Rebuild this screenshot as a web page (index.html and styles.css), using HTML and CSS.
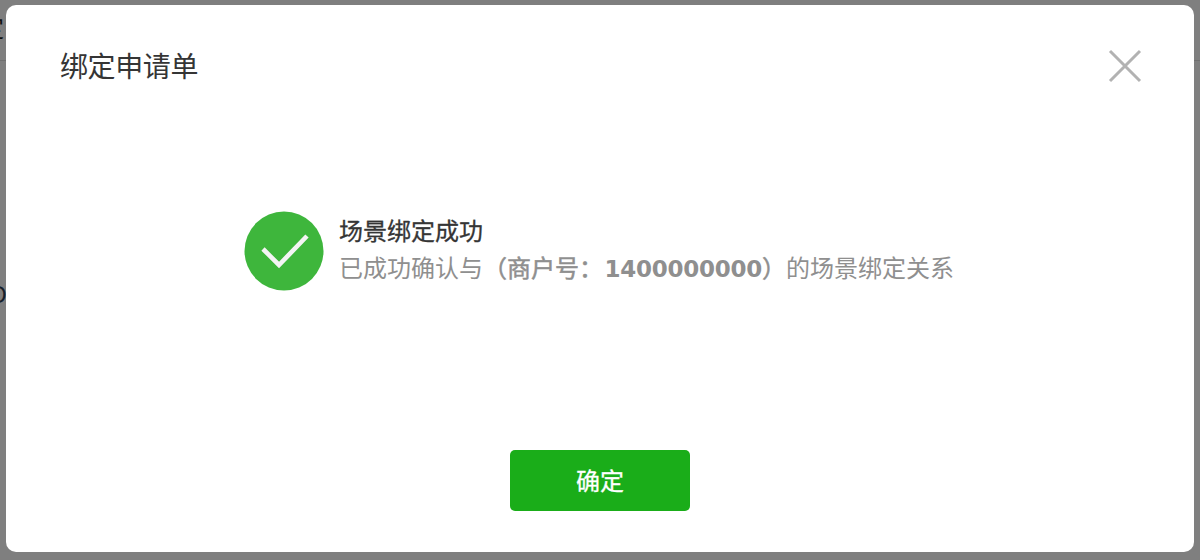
FILE: index.html
```html
<!DOCTYPE html>
<html lang="zh-CN">
<head>
  <meta charset="UTF-8" />
  <meta name="viewport" content="width=device-width, initial-scale=1.0"/>
  <title>绑定申请单</title>
  <link rel="stylesheet" href="styles.css">
</head>
<body>
  <div class="page-behind">
    <span class="behind-top">定</span>
    <span class="behind-mid">O</span>
    <div class="behind-line"></div>
  </div>

  <div class="mask">
    <div class="dialog">
      <div class="dialog-head">
        <h3 class="dialog-title">绑定申请单</h3>
        <a class="dialog-close" href="#" aria-label="关闭">
          <svg width="34" height="34" viewBox="0 0 34 34">
            <path d="M2 2 L32 32 M32 2 L2 32" stroke="#b2b2b2" stroke-width="3" fill="none"/>
          </svg>
        </a>
      </div>
      <div class="dialog-body">
        <svg class="result-icon" width="80" height="80" viewBox="0 0 80 80">
          <circle cx="40" cy="40" r="39.5" fill="#3eb63c"/>
          <path d="M19 38 L35 54 L63 25" stroke="#f4f4f4" stroke-width="4.6" fill="none"/>
        </svg>
        <div class="result-text">
          <p class="result-title">场景绑定成功</p>
          <p class="result-desc">已成功确认与<b>（商户号：<span class="merchant-no">1400000000</span>）</b>的场景绑定关系</p>
        </div>
      </div>
      <div class="dialog-foot">
        <a class="btn-primary" href="#">确定</a>
      </div>
    </div>
  </div>
</body>
</html>
```

FILE: styles.css
```css
* { margin: 0; padding: 0; box-sizing: border-box; }
html, body {
  height: 100%;
  overflow: hidden;
}
body {
  background: #7f7f7f;
  font-family: "Noto Sans CJK SC", "Noto Sans", sans-serif;
  color: #353535;
}
a { text-decoration: none; }

/* the page under the mask, only its edges show */
.page-behind {
  position: absolute;
  top: 0;
  left: 0;
  width: 100%;
  height: 100%;
}
.behind-top {
  position: absolute;
  top: 10px;
  left: -20px;
  font-size: 24px;
  line-height: 34px;
  color: #111;
}
.behind-mid {
  position: absolute;
  top: 278px;
  left: -12px;
  font-family: "Liberation Sans", sans-serif;
  font-size: 24px;
  line-height: 34px;
  color: #16202c;
}
.behind-line {
  position: absolute;
  top: 60px;
  left: 0;
  width: 100%;
  height: 1px;
  background: #707070;
}

.mask {
  position: absolute;
  top: 0;
  left: 0;
  width: 100%;
  height: 100%;
  padding: 5px 6px 8px;
}
.dialog {
  height: 100%;
  background: #fff;
  border-radius: 10px;
  display: flex;
  flex-direction: column;
}
.dialog-head {
  display: flex;
  justify-content: space-between;
  align-items: flex-start;
  padding: 43px 52px 0 54px;
}
.dialog-title {
  font-size: 28px;
  line-height: 34px;
  font-weight: 400;
  letter-spacing: -0.4px;
}
.dialog-close {
  display: block;
  width: 34px;
  height: 34px;
  margin-top: 1px;
}
.dialog-body {
  display: flex;
  align-items: flex-start;
  gap: 15px;
  margin-top: 128px;
  padding-left: 238px;
}
.result-icon { flex: none; }
.result-title {
  font-size: 24px;
  line-height: 37px;
  font-weight: 400;
  -webkit-text-stroke: 0.3px #353535;
}
.result-desc {
  font-size: 24px;
  line-height: 37px;
  color: #8f8f8f;
}
.result-desc b {
  font-weight: 400;
  -webkit-text-stroke: 0.5px #8f8f8f;
}
.merchant-no {
  margin-left: 1.5px;
  font-family: "DejaVu Sans", sans-serif;
  font-size: 23px;
  font-weight: 700;
  letter-spacing: -0.25px;
  -webkit-text-stroke: 0;
}
.dialog-foot {
  margin-top: auto;
  padding-bottom: 41px;
  display: flex;
  justify-content: center;
}
.btn-primary {
  display: block;
  width: 180px;
  height: 61px;
  line-height: 59px;
  background: #1aad19;
  border-radius: 5px;
  color: #fff;
  font-size: 24px;
  font-weight: 400;
  -webkit-text-stroke: 0.3px #fff;
  text-align: center;
}
```
